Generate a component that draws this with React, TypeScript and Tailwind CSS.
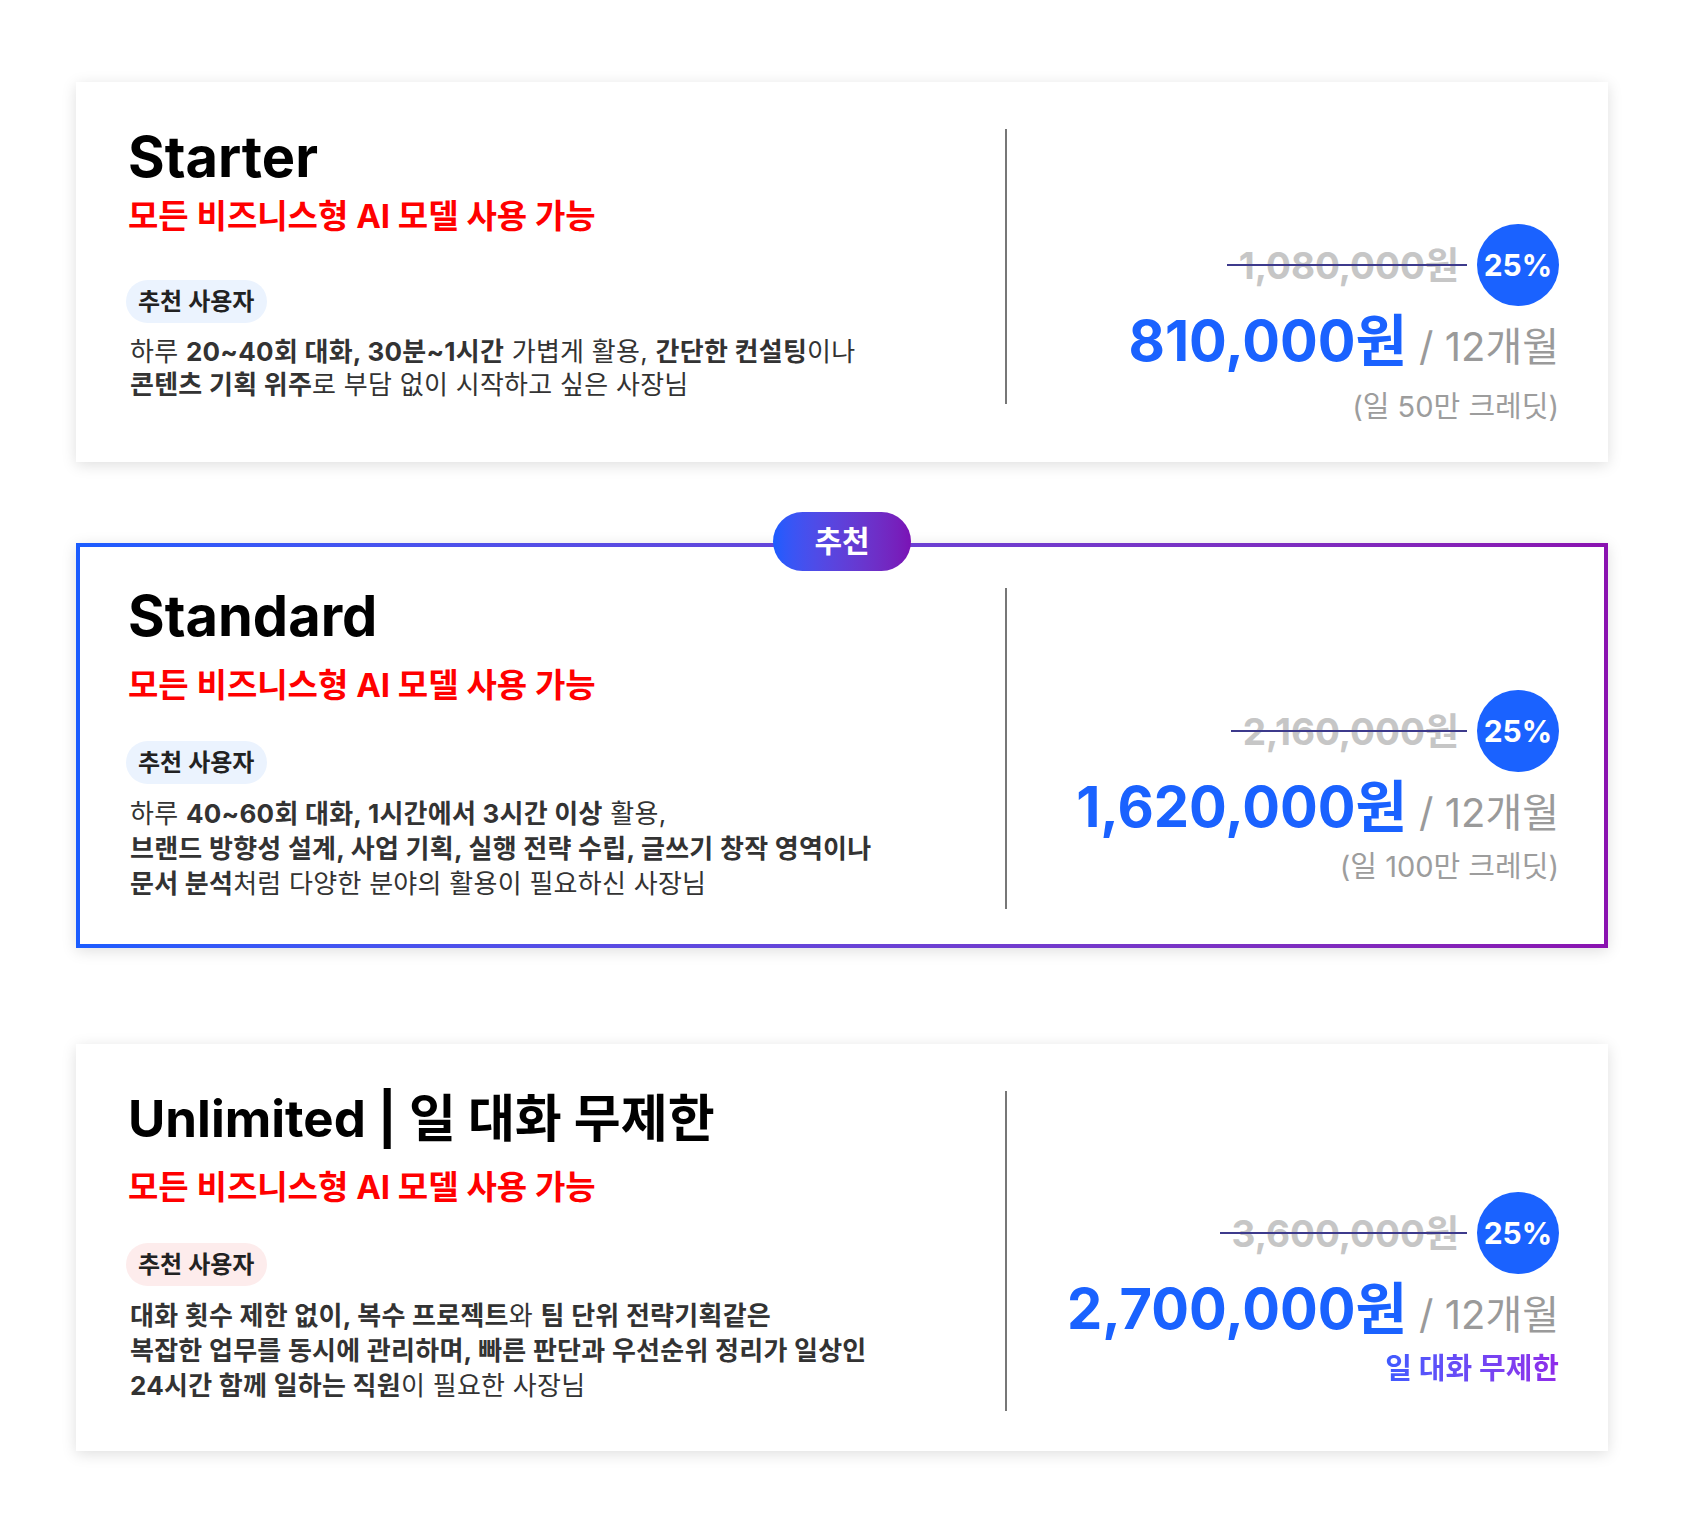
import type { ReactNode } from 'react'

type Plan = {
  title: string
  titleSize: string
  badgeClass: string
  desc: ReactNode
  original: string
  price: string
  note: ReactNode
  rightPt: string
  noteMt: string
  redMt: string
  badgeMt: string
  descLeading: string
  leftPb: string
}

const font = { fontFamily: '"Inter", "Noto Sans CJK KR", sans-serif' }

function PlanBody({ plan }: { plan: Plan }) {
  return (
    <div className="flex items-start">
      <div className={`w-[881px] shrink-0 border-r-2 border-[#777777] ${plan.leftPb}`}>
        <h2 className={`ml-[2px] ${plan.titleSize} font-bold text-black`}>{plan.title}</h2>
        <p
          className={`${plan.redMt} ml-[2px] text-[33px] font-bold leading-[38px] text-[#ff0000]`}
        >
          모든 비즈니스형 AI 모델 사용 가능
        </p>
        <div
          className={`${plan.badgeMt} ${plan.badgeClass} flex h-[43px] w-fit items-center rounded-full pr-[13px] pl-[12px] text-[24px] font-semibold text-[#222222]`}
        >
          추천 사용자
        </div>
        <p
          className={`mt-[12px] ml-[4px] text-[26px] ${plan.descLeading} tracking-[0.01em] text-[#333333]`}
        >
          {plan.desc}
        </p>
      </div>

      <div className={`flex flex-1 flex-col items-end ${plan.rightPt}`}>
        <div className="flex items-center gap-[10px]">
          <span className="relative pr-[8px] pl-[12px] text-[37px] font-bold leading-none text-[#c6c6c6]">
            {plan.original}
            <span className="absolute left-0 right-0 top-1/2 h-[2px] -translate-y-1/2 bg-[#3d3a8c]" />
          </span>
          <div className="flex h-[82px] w-[82px] items-center justify-center rounded-full bg-[#1a62ff] text-[30px] font-bold text-white">
            25%
          </div>
        </div>
        <div className="mt-[7px] flex items-baseline">
          <span className="text-[56px] font-bold leading-none text-[#1a62ff]">
            {plan.price}
          </span>
          <span className="ml-[12px] text-[40px] leading-none text-[#9a9a9a]">/ 12개월</span>
        </div>
        <div className={`${plan.noteMt} text-[29px] leading-[34px] text-[#9d9d9d]`}>
          {plan.note}
        </div>
      </div>
    </div>
  )
}

const plans: Plan[] = [
  {
    title: 'Starter',
    titleSize: 'text-[56px] leading-none',
    badgeClass: 'bg-[#ebf3fe]',
    desc: (
      <>
        하루 <b>20~40회 대화, 30분~1시간</b> 가볍게 활용, <b>간단한 컨설팅</b>이나
        <br />
        <b>콘텐츠 기획 위주</b>로 부담 없이 시작하고 싶은 사장님
      </>
    ),
    original: '1,080,000원',
    price: '810,000원',
    note: '(일 50만 크레딧)',
    rightPt: 'pt-[95px]',
    noteMt: 'mt-[21px]',
    redMt: 'mt-[12px]',
    badgeMt: 'mt-[45px]',
    descLeading: 'leading-[33px]',
    leftPb: 'pb-[3px]',
  },
  {
    title: 'Standard',
    titleSize: 'text-[56px] leading-none',
    badgeClass: 'bg-[#ebf3fe]',
    desc: (
      <>
        하루 <b>40~60회 대화, 1시간에서 3시간 이상</b> 활용,
        <br />
        <b>브랜드 방향성 설계, 사업 기획, 실행 전략 수립, 글쓰기 창작 영역이나</b>
        <br />
        <b>문서 분석</b>처럼 다양한 분야의 활용이 필요하신 사장님
      </>
    ),
    original: '2,160,000원',
    price: '1,620,000원',
    note: '(일 100만 크레딧)',
    rightPt: 'pt-[102px]',
    noteMt: 'mt-[15px]',
    redMt: 'mt-[22px]',
    badgeMt: 'mt-[37px]',
    descLeading: 'leading-[35px]',
    leftPb: 'pb-[8px]',
  },
  {
    title: 'Unlimited | 일 대화 무제한',
    titleSize: 'text-[51px] leading-[56px]',
    badgeClass: 'bg-[#fdecec]',
    desc: (
      <>
        <b>대화 횟수 제한 없이, 복수 프로젝트</b>와 <b>팀 단위 전략기획같은</b>
        <br />
        <b>복잡한 업무를 동시에 관리하며, 빠른 판단과 우선순위 정리가 일상인</b>
        <br />
        <b>24시간 함께 일하는 직원</b>이 필요한 사장님
      </>
    ),
    original: '3,600,000원',
    price: '2,700,000원',
    note: (
      <span className="bg-linear-to-r from-[#3d5bff] to-[#8f2bea] bg-clip-text font-bold text-transparent">
        일 대화 무제한
      </span>
    ),
    rightPt: 'pt-[101px]',
    noteMt: 'mt-[15px]',
    redMt: 'mt-[21px]',
    badgeMt: 'mt-[37px]',
    descLeading: 'leading-[35px]',
    leftPb: 'pb-[8px]',
  },
]

export default function App() {
  return (
    <div className="min-h-screen bg-white" style={font}>
      <div className="ml-[76px] flex w-[1532px] flex-col pt-[82px] pb-[83px]">
        <div className="h-[380px] bg-white pt-[47px] pr-[49px] pl-[50px] shadow-[0_3px_14px_rgba(0,0,0,0.13)]">
          <PlanBody plan={plans[0]} />
        </div>

        <div className="relative mt-[81px] h-[405px] bg-linear-to-r from-[#1a5cff] to-[#8a12b0] p-[4px] shadow-[0_3px_14px_rgba(0,0,0,0.13)]">
          <div className="absolute top-[-31px] left-1/2 flex h-[59px] w-[138px] -translate-x-1/2 items-center justify-center rounded-full bg-linear-to-r from-[#1a5cff] to-[#7a12b5] text-[30px] font-bold text-white">
            추천
          </div>
          <div className="h-full bg-white pt-[41px] pr-[45px] pl-[46px]">
            <PlanBody plan={plans[1]} />
          </div>
        </div>

        <div className="mt-[96px] h-[407px] bg-white pt-[47px] pr-[49px] pl-[50px] shadow-[0_3px_14px_rgba(0,0,0,0.13)]">
          <PlanBody plan={plans[2]} />
        </div>
      </div>
    </div>
  )
}
